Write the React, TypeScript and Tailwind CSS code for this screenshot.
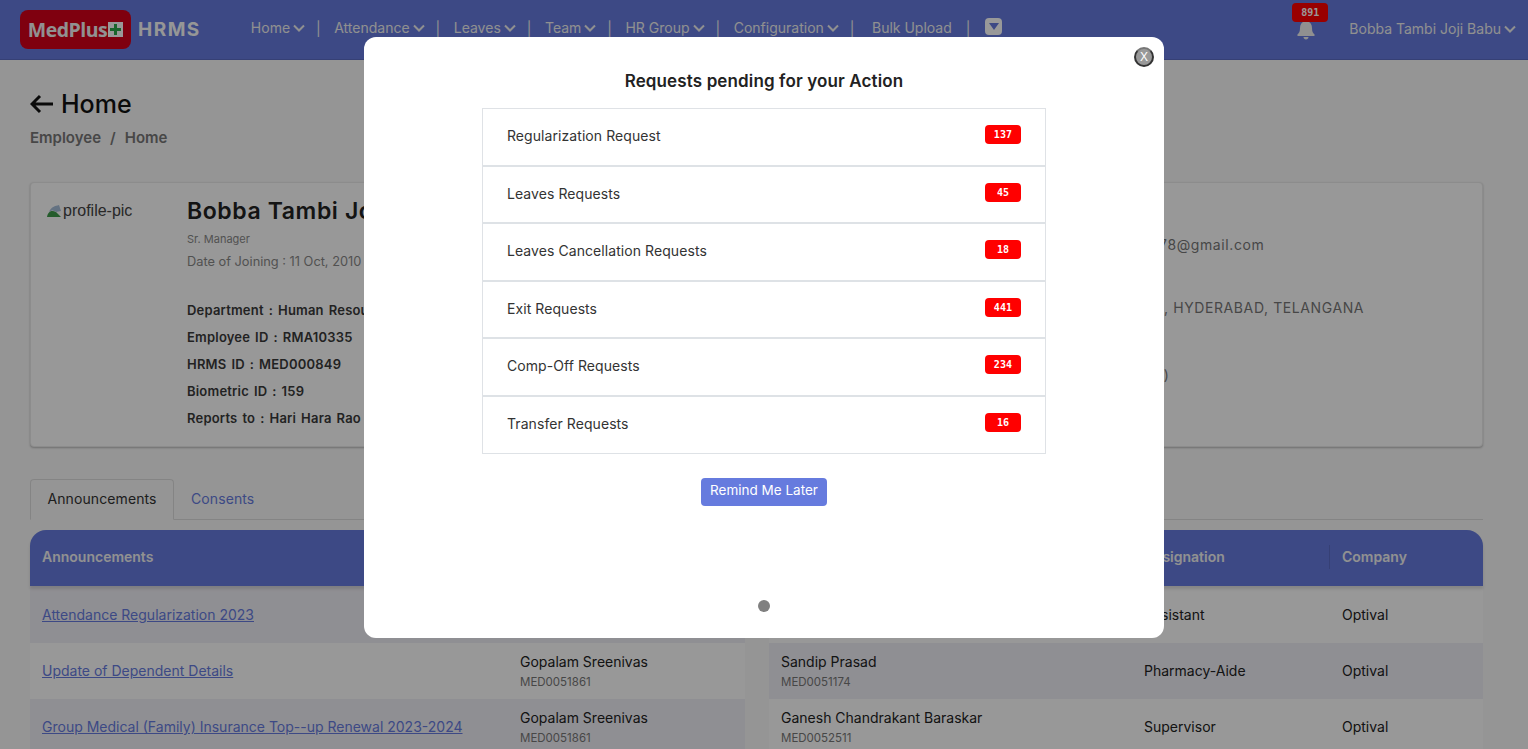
const font = "font-['Inter','Noto_Sans',sans-serif]";

const navItems = ['Home', 'Attendance', 'Leaves', 'Team', 'HR Group', 'Configuration'];

const requests = [
  { label: 'Regularization Request', count: 137 },
  { label: 'Leaves Requests', count: 45 },
  { label: 'Leaves Cancellation Requests', count: 18 },
  { label: 'Exit Requests', count: 441 },
  { label: 'Comp-Off Requests', count: 234 },
  { label: 'Transfer Requests', count: 16 },
];

const leftRows = [
  { title: 'Attendance Regularization 2023', name: 'Gopalam Sreenivas', id: 'MED0051861' },
  { title: 'Update of Dependent Details', name: 'Gopalam Sreenivas', id: 'MED0051861' },
  { title: 'Group Medical (Family) Insurance Top--up Renewal 2023-2024', name: 'Gopalam Sreenivas', id: 'MED0051861' },
];

const rightRows = [
  { name: 'Srinivas Rao', id: 'MED0051170', role: 'Assistant' },
  { name: 'Sandip Prasad', id: 'MED0051174', role: 'Pharmacy-Aide' },
  { name: 'Ganesh Chandrakant Baraskar', id: 'MED0052511', role: 'Supervisor' },
];

function Chevron() {
  return (
    <svg width="12" height="8" viewBox="0 0 12 8" fill="none" stroke="currentColor" strokeWidth="2" className="ml-[3px]">
      <path d="M1 1.500l5 5 5-5" />
    </svg>
  );
}

function TopNav() {
  return (
    <header className="h-[60px] bg-[#667bde] border-b border-[#5a6cc4] flex items-start pl-5 pr-3 text-[#f0f0f0] shrink-0">
      <div className="mt-2.5 w-[111px] h-[39px] rounded-lg bg-[#d4001a] flex items-center justify-center gap-px">
        <span className="text-[19.5px] font-bold text-[#f2f2f2] font-['Open_Sans',sans-serif] tracking-[-0.5px]">MedPlus</span>
        <span className="w-[15px] h-[15px] bg-white flex items-center justify-center">
          <svg width="13" height="13" viewBox="0 0 13 13"><path d="M5 1h3v4h4v3H8v4H5V8H1V5h4z" fill="#2aa84a" /></svg>
        </span>
      </div>
      <span className="mt-[17px] ml-[7px] text-[19px] font-bold tracking-[1.5px] text-[#fafafa] leading-[26px]">HRMS</span>
      <nav className="ml-[50px] mt-[17px] flex items-center text-[14px] leading-5">
        {navItems.map((item) => (
          <div key={item} className="flex items-center">
            <span>{item}</span>
            <Chevron />
            <span className="ml-[11px] mr-[13.5px] mt-0.5">|</span>
          </div>
        ))}
        <span className="ml-[4px]">Bulk Upload</span>
        <span className="ml-[14px] mr-[15px] mt-0.5">|</span>
        <span className="w-[17px] h-[17px] rounded-sm bg-white -mt-1 flex items-center justify-center">
          <svg width="10" height="7" viewBox="0 0 10 7"><path d="M0 0h10L5 7z" fill="#667bde" /></svg>
        </span>
      </nav>
      <div className="ml-auto flex items-start">
        <div className="relative w-[18px] h-[40px] mt-[20px] mr-[34px]">
          <svg width="18" height="20" viewBox="0 0 18 20" fill="#f0f0f0">
            <path d="M9 0c1 0 1.500.7 1.500 1.500C13.500 2.200 15 4.700 15 8c0 3.500.8 5 2.500 6.500.5.500.2 1.500-.7 1.500H1.200c-.9 0-1.200-1-.7-1.500C2.200 13 3 11.500 3 8c0-3.300 1.500-5.800 4.500-6.500C7.500.7 8 0 9 0zM6.500 17h5c0 1.300-1.100 2.500-2.500 2.500S6.500 18.300 6.500 17z" />
          </svg>
          <span className="absolute -top-[17px] -left-[5px] w-9 h-[19px] rounded bg-[#ff0000] text-white text-[10px] font-bold font-['DejaVu_Sans_Mono',monospace] flex items-center justify-center">891</span>
        </div>
        <div className="mt-[19px] flex items-center text-[14px] leading-5">
          Bobba Tambi Joji Babu
          <Chevron />
        </div>
      </div>
    </header>
  );
}

function ProfileCard() {
  return (
    <section className="ml-[30px] mr-[45px] mt-[34px] h-[265px] rounded-sm bg-[#fefefe] border border-[#e9e9e9] shadow-[0_1px_2px_rgba(0,0,0,0.25)] flex text-[#333] shrink-0">
      <div className="pl-[16px] pt-[18px] w-[156px] shrink-0 text-[16px] text-[#444] font-['Liberation_Sans',sans-serif] flex items-start">
        <svg width="16" height="16" viewBox="0 0 16 16" className="mt-[3px] shrink-0">
          <path d="M0 13C1 7 5 6 9 8l5 5z" fill="#3f9a4a" />
          <path d="M2 8C4 3 8 2 12 1l2 6-5 1C6 6 4 6 2 8z" fill="#a7bed9" />
        </svg>
        <span className="leading-[20px]">profile-pic</span>
      </div>
      <div className="w-[700px] pt-[13px] shrink-0">
        <div className="text-[23px] leading-[30px] font-semibold tracking-[0.6px] text-[#222]">Bobba Tambi Joji Babu</div>
        <div className="text-[11px] text-[#888] mt-[5px]">Sr. Manager</div>
        <div className="text-[12.8px] text-[#888] mt-[4px]">Date of Joining : 11 Oct, 2010</div>
        <div className="mt-[29px] text-[13px] font-semibold text-[#3a3a3a] flex flex-col gap-[7px] leading-5 tracking-[0.2px] [word-spacing:1.5px]">
          <div>Department : Human Resources</div>
          <div>Employee ID : RMA10335</div>
          <div>HRMS ID : MED000849</div>
          <div>Biometric ID : 159</div>
          <div>Reports to : Hari Hara Rao D</div>
        </div>
      </div>
      <div className="pt-[51px] text-[14px] text-[#777] tracking-[0.6px] flex-1">
        <div className="pl-[206px] whitespace-nowrap">bobbajoji78@gmail.com</div>
        <div className="mt-[42px] pl-[277px] whitespace-nowrap">, HYDERABAD, TELANGANA</div>
        <div className="mt-[46px] pl-[250px] whitespace-nowrap">(O+)</div>
      </div>
    </section>
  );
}

function PersonCell({ name, id }: { name: string; id: string }) {
  return (
    <div>
      <div className="text-[14px] leading-5 text-[#222]">{name}</div>
      <div className="text-[11.5px] leading-4 mt-0.5 text-[#777]">{id}</div>
    </div>
  );
}

function Tables() {
  return (
    <div className="ml-[30px] mr-[45px] mt-[10px] flex gap-6">
      <div className="w-[715px] shrink-0">
        <div className="h-14 pb-1 bg-[#667bde] rounded-tl-2xl flex items-center pl-3 text-[14px] font-semibold text-[#f2f2f2] shadow-[0_3px_3px_rgba(0,0,0,0.12)] relative">
          <span className="w-[478px]">Announcements</span>
          <span>Released By</span>
        </div>
        {leftRows.map((row, i) => (
          <div key={row.title} className={`${i === 0 ? 'h-[57px]' : 'h-14'} pb-px flex items-center pl-3 ${i % 2 === 0 ? 'bg-[#efeef5]' : 'bg-[#fdfdfd]'}`}>
            <a className="w-[478px] shrink-0 text-[14px] text-[#667bde] underline">{row.title}</a>
            <PersonCell name={row.name} id={row.id} />
          </div>
        ))}
      </div>
      <div className="flex-1">
        <div className="h-14 pb-1 bg-[#667bde] rounded-tr-2xl flex items-center pl-3 text-[14px] font-semibold text-[#f2f2f2] shadow-[0_3px_3px_rgba(0,0,0,0.12)] relative">
          <span className="w-[363px]">Employee</span>
          <span className="w-[197px]">Designation</span>
          <span className="border-l border-[#5a6cc4] pl-3 h-6 leading-6 mt-px -ml-3">Company</span>
        </div>
        {rightRows.map((row, i) => (
          <div key={row.id} className={`${i === 0 ? 'h-[57px]' : 'h-14'} pb-px flex items-center pl-3 text-[14px] text-[#222] ${i % 2 === 1 ? 'bg-[#efeef5]' : 'bg-[#fdfdfd]'}`}>
            <div className="w-[363px] shrink-0"><PersonCell name={row.name} id={row.id} /></div>
            <span className="w-[198px] shrink-0">{row.role}</span>
            <span>Optival</span>
          </div>
        ))}
      </div>
    </div>
  );
}

function RequestsModal() {
  return (
    <div className="fixed inset-0 bg-black/40">
      <div className="absolute left-[364px] top-[37px] w-[800px] h-[601px] bg-white rounded-xl flex flex-col items-center">
        <button className="absolute top-[10px] right-[10px] w-[20px] h-[20px] rounded-full bg-[#999] border-2 border-[#333] border-t-[#777] text-white text-[12px] leading-none font-['Liberation_Sans',sans-serif] flex items-center justify-center">
          X
        </button>
        <h2 className="mt-[33px] text-[17px] leading-[22px] font-semibold tracking-[0.13px] text-[#222]">Requests pending for your Action</h2>
        <ul className="mt-[16px] w-[564px] border border-[#dfe2e6] border-b-0">
          {requests.map((r) => (
            <li key={r.label} className="h-[57.500px] border-b-2 border-[#dee2e6] last:border-b flex items-center justify-between px-6 text-[14px] tracking-[0.07px] text-[#333]">
              <span className="-mt-0.5">{r.label}</span>
              <span className="w-9 h-[19px] -mt-1 rounded-[4px] bg-[#ff0000] text-white text-[10px] font-bold font-['DejaVu_Sans_Mono',monospace] flex items-center justify-center">
                {r.count}
              </span>
            </li>
          ))}
        </ul>
        <button className="mt-6 w-[126px] h-7 rounded bg-[#667bde] text-white text-[13.5px] pb-[3px]">Remind Me Later</button>
        <span className="mt-[94px] w-3 h-3 rounded-full bg-[#808080]" />
      </div>
    </div>
  );
}

export default function App() {
  return (
    <div className={`h-[749px] overflow-hidden bg-[#f8f8f8] flex flex-col ${font}`}>
      <TopNav />
      <div className="pl-[30px] pt-[26px] shrink-0">
        <div className="flex items-center text-[25px] leading-9 font-medium text-[#111]">
          <svg width="24" height="20" viewBox="0 0 24 20" fill="none" stroke="currentColor" strokeWidth="3" className="mr-[7px]">
            <path d="M23 10H2M10 2l-8 8 8 8" />
          </svg>
          Home
        </div>
        <div className="mt-[6px] text-[15px] leading-5 font-semibold text-[#777]">
          Employee<span className="mx-[9px]">/</span>Home
        </div>
      </div>
      <ProfileCard />
      <div className="ml-[30px] mr-[45px] mt-[32px] h-[41px] border-b border-[#ddd] flex items-end shrink-0">
        <div className="h-[41px] w-[144px] pb-0.5 -mb-px border border-[#ddd] border-b-[#f8f8f8] flex items-center justify-center text-[14px] tracking-[0.1px] text-[#333] rounded-t-sm">Announcements</div>
        <div className="h-[41px] flex items-center pl-[17px] text-[14px] tracking-[0.1px] text-[#667bde]">Consents</div>
      </div>
      <Tables />
      <RequestsModal />
    </div>
  );
}
